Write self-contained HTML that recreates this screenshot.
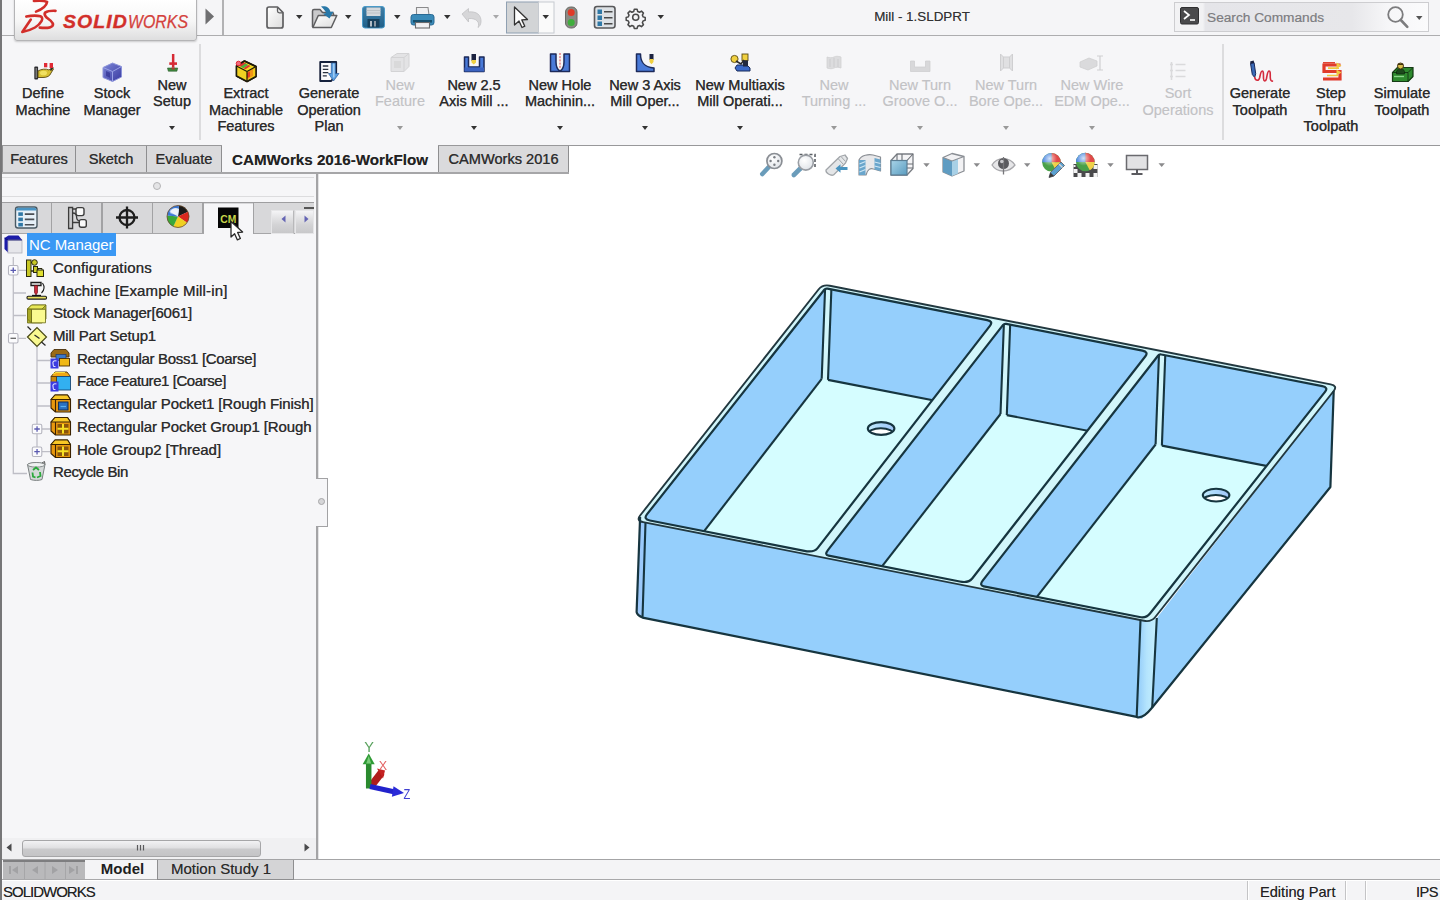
<!DOCTYPE html>
<html lang="en">
<head>
<meta charset="utf-8">
<title>Mill - 1.SLDPRT - SOLIDWORKS</title>
<style>
*{box-sizing:border-box;margin:0;padding:0}
html,body{width:1440px;height:900px;overflow:hidden;background:#fff}
body{font-family:"Liberation Sans",sans-serif;color:#222;position:relative;font-size:15px}
.abs{position:absolute}
#titlebar{position:absolute;left:0;top:0;width:1440px;height:36px;background:#f5f5f7}
#ribbon{position:absolute;left:0;top:36px;width:1440px;height:110px;background:#f6f6f8}
.rb{-webkit-text-stroke:.25px #2a2a2a;position:absolute;text-align:center;font-size:14.5px;line-height:16.5px;color:#2a2a2a;white-space:nowrap;transform:translateX(-50%);text-shadow:0 0 0.6px rgba(40,40,40,.55)}
.rb.dis{color:#c2c2c5;text-shadow:none;-webkit-text-stroke:.15px #c2c2c5}
.dd{position:absolute;width:0;height:0;border-left:3.5px solid transparent;border-right:3.5px solid transparent;border-top:4px solid #333;transform:translateX(-50%)}
.dd.dis{border-top-color:#999}
.tab{position:absolute;top:146px;height:28px;background:#dadadc;border:1px solid #8e8e90;border-bottom:1.5px solid #98989a;border-top:none;border-left:none;font-size:14.6px;line-height:27.5px;-webkit-text-stroke:.2px #333;text-align:center;color:#2c2c2c;white-space:nowrap;text-shadow:0 0 0.5px rgba(40,40,40,.5)}
.tab.act{background:#f6f6f8;border-bottom-color:#f6f6f8;border-top-color:#8e8e90;font-weight:bold;color:#222}
#panel{position:absolute;left:0;top:173px;width:319px;height:686px;background:#f6f6f8}
.tr{-webkit-text-stroke:.2px #2b2b2b;position:absolute;font-size:15px;line-height:22px;height:22px;white-space:nowrap;color:#2b2b2b;text-shadow:0 0 0.5px rgba(40,40,40,.5)}
svg{position:absolute;overflow:visible}
</style>
</head>
<body>
<div id="titlebar">
  <!-- window left edge -->
  <div class="abs" style="left:0;top:0;width:2px;height:900px;background:#767678;z-index:50"></div>
  <!-- bottom line of title bar -->
  <div class="abs" style="left:0;top:35px;width:1440px;height:2px;background:#adadaf"></div>
  <!-- logo box -->
  <div class="abs" style="left:14px;top:-2px;width:183px;height:43px;border:1px solid #b4b4b6;border-radius:0 0 3px 3px;background:linear-gradient(#ffffff 0%,#f6f6f6 55%,#dededf 100%);box-shadow:0 1px 2px rgba(0,0,0,.18);z-index:5"></div>
  <svg class="abs" style="left:0;top:0;z-index:6" width="200" height="40" viewBox="0 0 200 40">
    <g fill="none" stroke="#d22f2a" stroke-linecap="round" stroke-linejoin="round" filter="url(#lgsoft)">
      <path d="M33.800 1 C39 .6 44 .6 47.200 1.800 C46.500 6 41 9.800 36 11.600" stroke-width="2.500"/>
      <path d="M26.300 16.600 C31 15.600 37 15.400 40.500 16.300 C44.500 18 41 24 35 27.500 C31 29.800 26.500 31.300 22.300 32 L30.800 19.600" stroke-width="2.600"/>
      <path d="M55.500 10.800 C51 10.600 47.500 11 45.500 12.300 C43.500 14.200 45.500 16.800 48.500 19 C52 21.500 54 23.600 52.500 25.800 C50.500 28 45 28.200 39.800 27.600" stroke-width="2.700"/>
    </g>
    <defs><filter id="lgsoft" x="-5%" y="-5%" width="110%" height="110%"><feGaussianBlur stdDeviation=".35"/></filter></defs>
    <text x="63" y="28.200" font-family="Liberation Sans, sans-serif" font-size="18" font-style="italic" font-weight="bold" fill="#d22f2a" stroke="#d22f2a" stroke-width=".35" textLength="65" lengthAdjust="spacingAndGlyphs" letter-spacing="1">SOLID</text>
    <text x="128" y="28.200" font-family="Liberation Sans, sans-serif" font-size="18" font-style="italic" fill="#d4413c" stroke="#d4413c" stroke-width=".25" textLength="60" lengthAdjust="spacingAndGlyphs">WORKS</text>
  </svg>
  <!-- expand triangle -->
  <svg style="left:203px;top:7px" width="14" height="20" viewBox="0 0 14 20"><path d="M2.5 1.5 L11 9.5 L2.5 17.5 Z" fill="#6f6f71"/></svg>
  <div class="abs" style="left:222px;top:0;width:2px;height:35px;background:#b2b2b4"></div>

  <!-- quick access icons -->
  <svg style="left:260px;top:0" width="420" height="36" viewBox="260 0 420 36">
    <defs>
      <linearGradient id="gdoc" x1="0" y1="0" x2="1" y2="1"><stop offset="0" stop-color="#ffffff"/><stop offset="1" stop-color="#dcdcdc"/></linearGradient>
      <linearGradient id="gsave" x1="0" y1="0" x2="0" y2="1"><stop offset="0" stop-color="#3f7fa8"/><stop offset="1" stop-color="#1f5f88"/></linearGradient>
    </defs>
    <!-- new -->
    <path d="M269 7 h8.500 l5.500 5.500 v13.500 q0 2 -2 2 h-12 q-2 0 -2 -2 v-17 q0 -2 2 -2 z" fill="url(#gdoc)" stroke="#5e5e60" stroke-width="1.700" stroke-linejoin="round"/>
    <path d="M277.500 7.500 v3.500 q0 1.800 1.800 1.800 h3.400" fill="none" stroke="#5e5e60" stroke-width="1.300"/>
    <path d="M296 15 h6.500 l-3.250 4 z" fill="#333"/>
    <!-- open -->
    <path d="M312.500 27 v-16 q0 -1.500 1.500 -1.500 h6 l2.500 3 h9.500 q1.500 0 1.500 1.500 v4" fill="#c9c9cb" stroke="#5e5e60" stroke-width="1.500" stroke-linejoin="round"/>
    <path d="M312.800 27.500 l5.500 -12 h18.500 l-5.500 12 z" fill="url(#gdoc)" stroke="#5e5e60" stroke-width="1.500" stroke-linejoin="round"/>
    <path d="M321 6.500 c5 -1 8.500 1 9.500 5.500 l3 -.6 l-4 7 l-6.500 -4.600 l3.200 -.7 c-.8 -2.500 -2.500 -3.800 -5.200 -6.600 z" fill="#2878a8"/>
    <path d="M345 15 h6.500 l-3.250 4 z" fill="#333"/>
    <!-- save -->
    <rect x="362.500" y="6.500" width="22" height="21.500" rx="2.500" fill="url(#gsave)" stroke="#4a9ac8" stroke-width="1"/>
    <rect x="366.500" y="7.500" width="14" height="8.500" fill="#d4d8dc"/>
    <path d="M366.500 10.500 h14 M366.500 13 h14" stroke="#b8bcc0" stroke-width=".8"/>
    <rect x="367.500" y="19" width="12" height="8.500" fill="#17405c"/>
    <rect x="370" y="21" width="2" height="5.500" fill="#b0bcc6"/><rect x="374" y="21" width="2" height="5.500" fill="#8a98a4"/>
    <path d="M394 15 h6.500 l-3.250 4 z" fill="#333"/>
    <!-- print -->
    <path d="M416.500 15 v-7.500 h11.500 l1 7.500 z" fill="#f0f0f2" stroke="#8a8a8c" stroke-width="1.100"/>
    <rect x="411" y="14.500" width="23" height="10.500" rx="2.500" fill="#3a8ab8" stroke="#2a6a94" stroke-width="1"/>
    <rect x="413" y="20" width="19" height="2.600" fill="#16506e"/>
    <rect x="415.500" y="22.500" width="14" height="5.500" fill="#f0f0f2" stroke="#6a6a6c" stroke-width="1.100"/>
    <path d="M444 15 h6.500 l-3.250 4 z" fill="#333"/>
    <!-- undo (disabled) -->
    <path d="M462 14 l6.500 -5.500 v3.500 c8 -1 13 3 12.500 10 c-.2 2.500 -1.500 4.500 -3 5.500 c2 -5 -1 -9.500 -9.500 -9 v3.500 z" fill="#d6d6d8" stroke="#c2c2c4" stroke-width=".8"/>
    <path d="M493 15 h6 l-3 3.800 z" fill="#a8a8aa"/>
    <!-- select (active) -->
    <rect x="506.500" y="2" width="32" height="31" fill="#d2d4d6" stroke="#8fa0b2" stroke-width="1"/>
    <rect x="538.500" y="2" width="15.500" height="31" fill="#fafafa" stroke="#c6cad0" stroke-width="1"/>
    <path d="M514.500 7 v18 l4.500 -4 l3 6.500 l2.800 -1.300 l-3 -6.300 l5.700 -.4 z" fill="#fdfdfd" stroke="#333" stroke-width="1.300" stroke-linejoin="round"/>
    <path d="M542.500 15 h6.500 l-3.250 4 z" fill="#333"/>
    <!-- traffic light -->
    <rect x="565.500" y="7" width="11.500" height="21" rx="5" fill="#8a8a84" stroke="#6a6a66" stroke-width="1"/>
    <circle cx="571.200" cy="12.500" r="3.500" fill="#e03a28"/>
    <circle cx="571.200" cy="22.500" r="3.500" fill="#3fae3c"/>
    <!-- options list -->
    <rect x="594.500" y="6.500" width="20.500" height="21.500" rx="2.500" fill="#dde1e5" stroke="#58585a" stroke-width="1.600"/>
    <g fill="#2f78a6"><rect x="597.500" y="9.500" width="4.500" height="4.500"/><rect x="597.500" y="15.500" width="4.500" height="4.500"/><rect x="597.500" y="21.500" width="4.500" height="4.500"/></g>
    <g stroke="#4a4a4a" stroke-width="1.400"><path d="M604 11.700 h8.500 M604 17.700 h8.500 M604 23.700 h8.500"/></g>
    <!-- gear -->
    <g transform="translate(635.700 17.200) scale(.8)" fill="none" stroke="#4a4a4a">
      <circle r="3.800" stroke-width="1.900"/>
      <path stroke-width="1.900" stroke-linejoin="round" d="M-1.800 -9.800 h3.600 l.7 2.600 l2.300 1 l2.400 -1.400 l2.500 2.500 l-1.400 2.400 l1 2.300 l2.600 .7 v3.600 l-2.600 .7 l-1 2.300 l1.400 2.400 l-2.500 2.500 l-2.400 -1.400 l-2.300 1 l-.7 2.600 h-3.600 l-.7 -2.600 l-2.300 -1 l-2.400 1.400 l-2.500 -2.500 l1.400 -2.400 l-1 -2.300 l-2.600 -.7 v-3.600 l2.600 -.7 l1 -2.300 l-1.400 -2.400 l2.500 -2.500 l2.400 1.400 l2.300 -1 z"/>
    </g>
    <path d="M657.500 15 h6.500 l-3.250 4 z" fill="#333"/>
  </svg>

  <!-- document title -->
  <div class="abs" style="left:822px;top:8px;width:200px;text-align:center;font-size:13.4px;line-height:18px;color:#333;text-shadow:0 0 .5px rgba(40,40,40,.5)">Mill - 1.SLDPRT</div>

  <!-- search box -->
  <div class="abs" style="left:1173.500px;top:2px;width:255px;height:29.500px;background:linear-gradient(90deg,#f2f2f4 0%,#f2f2f4 11%,#e5e5e9 12%,#e7e7ea 70%,#f6f6f8 84%,#fbfbfc 100%);border:1px solid #cdcdd0"></div>
  <svg style="left:1180px;top:7px" width="20" height="18" viewBox="0 0 20 18"><rect x=".5" y=".5" width="18" height="16.500" rx="1.500" fill="#4a4a4c" stroke="#2e2e30"/><path d="M4 4 l5 4 l-5 4" fill="none" stroke="#fff" stroke-width="1.700"/><path d="M10 13 h5" stroke="#fff" stroke-width="1.600"/></svg>
  <div class="abs" style="left:1207px;top:9px;font-size:13.700px;line-height:18px;color:#7c7c80;-webkit-text-stroke:.2px #7c7c80;white-space:nowrap">Search Commands</div>
  <svg style="left:1384px;top:4px" width="44" height="26" viewBox="0 0 44 26"><circle cx="11.500" cy="10.500" r="7.300" fill="none" stroke="#7c7c7e" stroke-width="1.800"/><path d="M16.800 16 l6.500 6.800" stroke="#7c7c7e" stroke-width="2.600" stroke-linecap="round"/><path d="M32 12 h6.500 l-3.250 4 z" fill="#555"/></svg>
</div>
<div id="ribbon"></div>
<div class="abs" style="left:0;top:144.500px;width:1440px;height:1.500px;background:#98989a"></div>
<div class="abs" style="left:199px;top:44px;width:2px;height:96px;background:#dcdcde"></div>
<div class="abs" style="left:1222px;top:44px;width:2px;height:96px;background:#dcdcde"></div>
<div class="rb" style="left:43px;top:85px">Define<br>Machine</div>
<div class="rb" style="left:112px;top:85px">Stock<br>Manager</div>
<div class="rb" style="left:172px;top:76.5px">New<br>Setup</div>
<div class="dd" style="left:172px;top:126px"></div>
<div class="rb" style="left:246px;top:85px">Extract<br>Machinable<br>Features</div>
<div class="rb" style="left:329px;top:85px">Generate<br>Operation<br>Plan</div>
<div class="rb dis" style="left:400px;top:76.5px">New<br>Feature</div>
<div class="dd dis" style="left:400px;top:126px"></div>
<div class="rb" style="left:474px;top:76.5px">New 2.5<br>Axis Mill ...</div>
<div class="dd" style="left:474px;top:126px"></div>
<div class="rb" style="left:560px;top:76.5px">New Hole<br>Machinin...</div>
<div class="dd" style="left:560px;top:126px"></div>
<div class="rb" style="left:645px;top:76.5px">New 3 Axis<br>Mill Oper...</div>
<div class="dd" style="left:645px;top:126px"></div>
<div class="rb" style="left:740px;top:76.5px">New Multiaxis<br>Mill Operati...</div>
<div class="dd" style="left:740px;top:126px"></div>
<div class="rb dis" style="left:834px;top:76.5px">New<br>Turning ...</div>
<div class="dd dis" style="left:834px;top:126px"></div>
<div class="rb dis" style="left:920px;top:76.5px">New Turn<br>Groove O...</div>
<div class="dd dis" style="left:920px;top:126px"></div>
<div class="rb dis" style="left:1006px;top:76.5px">New Turn<br>Bore Ope...</div>
<div class="dd dis" style="left:1006px;top:126px"></div>
<div class="rb dis" style="left:1092px;top:76.5px">New Wire<br>EDM Ope...</div>
<div class="dd dis" style="left:1092px;top:126px"></div>
<div class="rb dis" style="left:1178px;top:85px">Sort<br>Operations</div>
<div class="rb" style="left:1260px;top:85px">Generate<br>Toolpath</div>
<div class="rb" style="left:1331px;top:85px">Step<br>Thru<br>Toolpath</div>
<div class="rb" style="left:1402px;top:85px">Simulate<br>Toolpath</div>
<svg style="left:0;top:0" width="1440" height="146" viewBox="0 0 1440 146">
  <defs>
    <linearGradient id="gcube" x1="0" y1="0" x2="1" y2="1"><stop offset="0" stop-color="#7c86d8"/><stop offset="1" stop-color="#3a3aa0"/></linearGradient>
    <filter id="soft" x="-10%" y="-10%" width="120%" height="120%"><feGaussianBlur stdDeviation=".45"/></filter>
  </defs>
  <g filter="url(#soft)">
  <!-- Define Machine (cx 43, cy 72) -->
  <g>
    <rect x="34.300" y="66.500" width="3.800" height="13" rx="1" fill="#2e2e30"/>
    <rect x="35.600" y="68" width="1.200" height="10" fill="#8a8a8c"/>
    <path d="M38 71 c3 -2 8 -2.500 11 -1 l3 -2.500 l1.500 1.500 l-2.500 4 c-1 3 -4 4.500 -8 4.500 h-5 z" fill="#d8c030" stroke="#5a4a14" stroke-width=".9"/>
    <ellipse cx="43.500" cy="73" rx="3.500" ry="2.300" fill="#f0e060"/>
    <path d="M50.500 70.500 l2.500 -3.500" stroke="#2a2a2a" stroke-width="1.600"/>
    <rect x="44" y="63" width="3.300" height="4.300" fill="#e02a36"/>
    <rect x="49.600" y="63" width="3.400" height="5" fill="#e02a36"/>
  </g>
  <!-- Stock Manager (cx 112, cy 72) -->
  <g>
    <path d="M103 67.500 l9.500 -4.500 l9 3.500 v10.500 l-9 4.500 l-9.500 -4 z" fill="url(#gcube)" stroke="#8a92d8" stroke-width="1"/>
    <path d="M103 67.500 l9.500 4 l9 -5 M112.500 71.500 v10" fill="none" stroke="#9aa2e6" stroke-width="1"/>
    <path d="M106 71 l4 1.800 v5 l-4 -1.800 z" fill="#2a2a88" opacity=".6"/>
  </g>
  <!-- New Setup (cx 172) -->
  <g>
    <rect x="171.900" y="54" width="2.500" height="13.500" fill="#d62a36"/>
    <rect x="169.300" y="62.300" width="7.700" height="2.600" fill="#d62a36"/>
    <path d="M167.500 68 h10.200 l-.8 3.200 h-8.600 z" fill="#3f8a3f" stroke="#2a5a2a" stroke-width=".6"/>
    <rect x="171.700" y="67.500" width="3" height="2" fill="#b03a30"/>
  </g>
  <!-- Extract Machinable Features (cx 246, cy 72) -->
  <g stroke-linejoin="round">
    <path d="M236.500 66 l8 -5 l11.500 5.500 v10 l-9 5 l-10.500 -5.500 z" fill="#f4d820" stroke="#1e1a08" stroke-width="1.500"/>
    <path d="M247 81.500 v-10 l9 -5 v10 z" fill="#f0c818"/>
    <path d="M236.500 66 l10.500 5.500 v10 l-10.500 -5.500 z" fill="#f0d020"/>
    <path d="M247 72 l6 -3.300 v7 l-6 3.500 z" fill="#f08a18" opacity=".85"/>
    <path d="M247 73 l3 -1.500 v5 l-3 1.800 z" fill="#e83a20"/>
    <path d="M237 64.500 l5 -3 l4.500 2.200 l-5 3.200 z" fill="#e03030"/>
    <path d="M240.500 66.800 l5 -3.200 l3 1.500 l-5 3.200 z" fill="#50b040"/>
    <path d="M243.500 68.300 l5 -3.200 l2 1 l-5 3.200 z" fill="#e03030"/>
    <path d="M236.500 66 l10.500 5.500 l9 -5 M247 71.500 v10" fill="none" stroke="#1e1a08" stroke-width="1.200"/>
    <path d="M236.500 66 l8 -5 l11.500 5.500 v10 l-9 5 l-10.500 -5.500 z" fill="none" stroke="#1e1a08" stroke-width="1.500"/>
    <circle cx="238.500" cy="63.500" r="2.300" fill="#f06a7a" stroke="#e02a36" stroke-width="1"/>
  </g>
  <!-- Generate Operation Plan (cx 329) -->
  <g>
    <path d="M320.200 62 h16 v12 l-5 7 h-11 z" fill="#fbfbfd" stroke="#18243e" stroke-width="1.800" stroke-linejoin="round"/>
    <path d="M322.800 66 h5.500 M322.800 69.300 h5.500 M322.800 72.600 h5.500 M322.800 75.900 h4" stroke="#2a3040" stroke-width="1.300"/>
    <path d="M331.300 63 h4.200 v10.500 h3.500 l-5.500 7.500 l-5 -7.500 h2.800 z" fill="#5a9ee0" stroke="#2a5a9a" stroke-width=".7"/>
    <path d="M333.800 63.500 v14" stroke="#a8d0f4" stroke-width="1.400"/>
  </g>
  <!-- New Feature disabled (cx 400) -->
  <g opacity=".9">
    <path d="M391 57.500 l6 -4 h12 v13 l-5 5 h-13 z" fill="#e2e2e4" stroke="#d0d0d2" stroke-width="1"/>
    <path d="M391 57.500 h13 l5 -4 M404 57.500 v14" fill="none" stroke="#d0d0d2" stroke-width="1"/>
    <rect x="394" y="61" width="7" height="7" fill="#d6d6d8"/>
  </g>
  <!-- New 2.5 Axis Mill (cx 474) -->
  <g>
    <path d="M464.500 57 h4 v10 h11 v-10 h4.500 v14.500 h-19.500 z" fill="#4a7ad8" stroke="#1a2a5a" stroke-width="1.500" stroke-linejoin="round"/>
    <path d="M464.500 67.500 h19.500 v4 h-19.500 z" fill="#3a62c0"/>
    <rect x="471.500" y="54" width="4.500" height="7" fill="#1a2240"/>
    <path d="M471.500 60 h4.500 v2.500 l-2.250 2 l-2.250 -2 z" fill="#f0d040"/>
  </g>
  <!-- New Hole Machining (cx 560) -->
  <g>
    <path d="M550.500 54 h5.500 v8 c0 5 2 8 4 9 c2 -1 4 -4 4 -9 v-8 h5.500 v17.500 h-19 z" fill="#4a7ad8" stroke="#1a2a5a" stroke-width="1.500" stroke-linejoin="round"/>
    <path d="M560 53 v16" stroke="#e04040" stroke-width="1" stroke-dasharray="2 1.200"/>
  </g>
  <!-- New 3 Axis (cx 645) -->
  <g>
    <path d="M636.500 54 h4 c0 8 3 13 13.500 14 v3.500 h-17.500 z" fill="#4a7ad8" stroke="#1a2a5a" stroke-width="1.500" stroke-linejoin="round"/>
    <rect x="649.500" y="54" width="4" height="6" fill="#1a2240"/>
    <path d="M649.500 59 h4 v3 l-2 2.200 l-2 -2.200 z" fill="#f0d040"/>
  </g>
  <!-- New Multiaxis (cx 740) -->
  <g>
    <circle cx="734.500" cy="59" r="3.600" fill="#f0d040" stroke="#5a4a10" stroke-width=".9"/>
    <rect x="742" y="54" width="6" height="6.500" fill="#f0d040" stroke="#5a4a10" stroke-width=".9"/>
    <path d="M736 61 l5 3 l3 -4" fill="none" stroke="#2a2a2a" stroke-width="1.600"/>
    <path d="M737 65 h10 l3 3 v3 h-13 l-2 -3 z" fill="#3a6ac8" stroke="#1a2a5a" stroke-width="1"/>
    <path d="M743 60.500 h5 v6 h-5 z" fill="#222a40"/>
  </g>
  <!-- New Turning disabled (cx 834) -->
  <g fill="#dcdcde" stroke="#d0d0d2" stroke-width=".8">
    <path d="M827 57 c3 1 5 1 7 0 c2 -1 4 -1 7 0 v11 c-3 -1 -5 -1 -7 0 c-2 1 -4 1 -7 0 z"/>
    <path d="M830 59 v8 M834 58 v9 M838 59 v8" fill="none" stroke="#c8c8ca"/>
  </g>
  <!-- New Turn Groove disabled (cx 920) -->
  <g fill="#d8d8da" stroke="#cfcfd1" stroke-width=".8">
    <path d="M910.500 61 h4 v6 h11 v-6 h4.500 v10.500 h-19.500 z"/>
  </g>
  <!-- New Turn Bore disabled (cx 1006) -->
  <g fill="#e0e0e2" stroke="#cfcfd1" stroke-width="1">
    <path d="M1000.500 54 l3 3 h6 l3 -3 v17 l-3 -3 h-6 l-3 3 z"/>
    <path d="M1003.500 57 v11 M1009.500 57 v11" fill="none"/>
  </g>
  <!-- New Wire EDM disabled (cx 1092) -->
  <g fill="#dadadc" stroke="#cfcfd1" stroke-width=".8">
    <path d="M1080 62 l9 -4 l8 3 v5 l-9 4 l-8 -3 z"/>
    <path d="M1097 56 h6 M1100 56 v14 M1097 70 h6" fill="none" stroke="#d0d0d2" stroke-width="1.200"/>
  </g>
  <!-- Sort Operations disabled (cx 1178) -->
  <g stroke="#dadadc" stroke-width="1.600" fill="none">
    <path d="M1171.500 62 v18 M1170 64.500 h3 M1170 70.500 h3 M1170 76.500 h3 M1175.500 64.500 h10 M1175.500 70.500 h10 M1175.500 76.500 h10"/>
  </g>
  <!-- Generate Toolpath (cx 1260) -->
  <g>
    <path d="M1250.500 63.500 l3.600 -.8 l1.600 11 l-1 3.800 l-2.400 -3 z" fill="#3a6ab8" stroke="#1a2a5a" stroke-width="1"/>
    <path d="M1250.400 63.800 l-.3 -2.400 l3.600 -.8 l.4 2.400 z" fill="#1a2040"/>
    <path d="M1254.700 77.500 c1 3.500 4 4 5 0 c.8 -4 1.200 -6.500 2.600 -6.500 c1.600 0 1 4.500 1.200 7.500 c.2 3 2.200 3.500 3 0 c.8 -4 1 -7.500 2.600 -7.500 c1.600 0 1 4 1.200 7 c.2 2.500 1.200 3.500 2.200 3" fill="none" stroke="#d42a3c" stroke-width="1.600" stroke-linecap="round"/>
  </g>
  <!-- Step Thru Toolpath (cx 1331) -->
  <g transform="translate(0 2)">
    <path d="M1340.500 63 h-16.500 v6.500 h16 v7.500 h-17" fill="none" stroke="#e03a2a" stroke-width="3.200"/>
    <path d="M1339 66.200 h-11 M1327 73.500 h11" fill="none" stroke="#f0c840" stroke-width="1.700"/>
    <path d="M1336.500 60.500 l5 3 l-5 3 z M1336.500 67.500 l5 3 l-5 3 z" fill="#f0c840"/>
    <path d="M1323 60.800 h12" stroke="#e03a2a" stroke-width="1.500"/>
  </g>
  <!-- Simulate Toolpath (cx 1402) -->
  <g>
    <path d="M1392.500 72.500 l5 -5 h15.500 v9 l-5 5 h-15.500 z" fill="#2f8a2f" stroke="#123a12" stroke-width="1.200" stroke-linejoin="round"/>
    <path d="M1392.500 72.500 h15.500 l5 -5 M1408 72.500 v9" fill="none" stroke="#123a12" stroke-width="1"/>
    <path d="M1394 76.500 h10" stroke="#8ad88a" stroke-width="1.300"/>
    <path d="M1396.500 71.500 c.5 -3.500 7.500 -3.500 8 0 v2.500 h-8 z" fill="#1e4a1e" stroke="#0e2a0e" stroke-width=".7"/>
    <circle cx="1400.500" cy="66" r="3" fill="#d8c050" stroke="#3a2a08" stroke-width=".9"/>
    <path d="M1397.800 64.300 h5.400" stroke="#3a2a08" stroke-width="1.300"/>
  </g>
  </g>
</svg>
<!-- command manager tabs -->
<div class="abs" style="left:0;top:146px;width:1440px;height:28px;background:#fff"></div>
<div class="tab" style="left:2px;width:74px;border-left:1px solid #8e8e90">Features</div>
<div class="tab" style="left:76px;width:71px">Sketch</div>
<div class="tab" style="left:147px;width:75px">Evaluate</div>
<div class="tab act" style="left:222px;width:216px;top:143px;height:31px;line-height:33.5px;font-size:15.200px;border-top:none;border-right:none;border-bottom:1.5px solid #98989a;-webkit-text-stroke:0">CAMWorks 2016-WorkFlow</div>
<div class="tab" style="left:438px;width:131px;border-left:1px solid #8e8e90">CAMWorks 2016</div>
<div id="panel">
  <!-- top border line -->
  
  <!-- right border -->
  <div class="abs" style="left:316px;top:0;width:2px;height:686px;background:#a4a4a6"></div>
  <div class="abs" style="left:318px;top:0;width:1px;height:686px;background:#e4e4e6"></div>
  <!-- header strip -->
  <div class="abs" style="left:2px;top:3.500px;width:312px;height:1.500px;background:#dcdcde"></div>
  <div class="abs" style="left:2px;top:22.500px;width:312px;height:1.500px;background:#dcdcde"></div>
  <div class="abs" style="left:153px;top:9px;width:8px;height:8px;border-radius:50%;border:1.500px solid #b4b4b6;background:#e4e4e6"></div>
  <!-- panel tab strip -->
  <div class="abs" style="left:2px;top:29px;width:312px;height:32px;background:#d8d8da;border-top:1.500px solid #9e9ea0;border-bottom:1.500px solid #a6a6a8"></div>
  <div class="abs" style="left:50.500px;top:30px;width:1.500px;height:30px;background:#a2a2a4"></div>
  <div class="abs" style="left:101px;top:30px;width:1.500px;height:30px;background:#a2a2a4"></div>
  <div class="abs" style="left:151.500px;top:30px;width:1.500px;height:30px;background:#a2a2a4"></div>
  <div class="abs" style="left:202px;top:30px;width:1.500px;height:30px;background:#a2a2a4"></div>
  <div class="abs" style="left:203.500px;top:30.500px;width:49px;height:32px;background:#f6f6f8"></div>
  <div class="abs" style="left:252.500px;top:30px;width:1.500px;height:31px;background:#a2a2a4"></div>
  <!-- scroll buttons -->
  <div class="abs" style="left:271px;top:37px;width:23px;height:24px;background:linear-gradient(#f4f4f6,#d4d4d6 60%,#c8c8ca);border:1px solid #e6e6e8;border-right-color:#b8b8ba"></div>
  <div class="abs" style="left:295px;top:37px;width:19px;height:24px;background:linear-gradient(#f4f4f6,#d4d4d6 60%,#c8c8ca);border:1px solid #e6e6e8"></div>
  <div class="abs" style="left:304px;top:33.500px;width:10px;height:2px;background:#555"></div>
  <svg style="left:0;top:27px" width="319" height="44" viewBox="0 200 319 44">
    <path d="M285.500 215.500 v7 l-4 -3.500 z" fill="#6464b4"/>
    <path d="M304.500 215.500 v7 l4 -3.500 z" fill="#6464b4"/>
    <!-- tab1: feature manager list -->
    <g>
      <rect x="15.500" y="207" width="21.500" height="21" rx="2.500" fill="#e6f0f8" stroke="#4a5a64" stroke-width="1.400"/>
      <path d="M16.200 210.500 v-1 q0 -1.800 1.800 -1.800 h16.500 q1.800 0 1.800 1.800 v1 z" fill="#4a94c4"/>
      <g fill="#2f78a6"><rect x="18.300" y="212.300" width="4.600" height="3.600"/><rect x="18.300" y="217.600" width="4.600" height="3.600"/><rect x="18.300" y="222.900" width="4.600" height="3.600"/></g>
      <path d="M24.800 214.100 h9.500 M24.800 219.400 h9.500 M24.800 224.700 h9.500" stroke="#4a4e54" stroke-width="1.600"/>
    </g>
    <!-- tab2: property manager -->
    <g>
      <path d="M68.600 207.500 h4 v21 h-4 z" fill="#c8c8ca" stroke="#3c3c3c" stroke-width="1.300"/>
      <path d="M72.600 209 h4 M72.600 222.500 h7" stroke="#3c3c3c" stroke-width="1.400" fill="none"/>
      <path d="M72.600 213 q4 0 4 4 t4 4" stroke="#3c3c3c" stroke-width="1.300" fill="none"/>
      <rect x="76" y="207.600" width="8" height="8" rx="2" fill="#fafafa" stroke="#3c3c3c" stroke-width="1.400"/>
      <rect x="79.300" y="219.600" width="7" height="7.600" rx="2" fill="#fafafa" stroke="#3c3c3c" stroke-width="1.400"/>
    </g>
    <!-- tab3: crosshair -->
    <g fill="none" stroke="#1e1e1e" stroke-width="2.300">
      <circle cx="127" cy="217.500" r="7.500"/>
      <path d="M127 206.500 v22 M116 217.500 h22"/>
    </g>
    <!-- tab4: colour ball -->
    <g>
      <path d="M178 216.5 L178.96 205.54 A11 11 0 0 1 187.97 211.85 Z" fill="#1a1a1a"/>
      <path d="M178 216.5 L187.97 211.85 A11 11 0 0 1 187.01 222.81 Z" fill="#d8281e"/>
      <path d="M178 216.5 L187.01 222.81 A11 11 0 0 1 173.35 226.47 Z" fill="#f0d020"/>
      <path d="M178 216.5 L173.35 226.47 A11 11 0 0 1 167.04 215.54 Z" fill="#3aa83a"/>
      <path d="M178 216.5 L167.04 215.54 A11 11 0 0 1 178.96 205.54 Z" fill="#3a78d8"/>
      <path d="M178 216.500 L170 212 C172 208 176 207 179 209 Z" fill="#ffffff" opacity=".85"/>
      <circle cx="178" cy="216.500" r="11" fill="none" stroke="#6a4a2a" stroke-width=".8"/>
      <ellipse cx="174" cy="211.500" rx="4.500" ry="3" fill="#fff" opacity=".4"/>
    </g>
    <!-- tab5: CAM -->
    <g>
      <rect x="218" y="207.500" width="20.500" height="20.500" fill="#060606"/>
      <text x="228.300" y="223" text-anchor="middle" font-family="Liberation Sans, sans-serif" font-size="11.500" font-weight="bold" fill="#c8d64a" textLength="16" lengthAdjust="spacingAndGlyphs">CM</text>
      <path d="M231 221.500 v15.500 l3.600 -3.300 l2.800 6.200 l3 -1.400 l-2.800 -6 l5 -.4 z" fill="#fff" stroke="#2a2a2a" stroke-width="1.300" stroke-linejoin="round"/>
    </g>
  </svg>
</div>
<!-- tree -->
<div class="abs" style="left:0;top:0;width:316px;height:860px;overflow:hidden">
<div class="tr" style="left:27px;top:233px;height:23px;line-height:23px;padding:0 3px 0 2px;background:#3a98f4;color:#fff;text-shadow:none;-webkit-text-stroke:0;letter-spacing:-0.055px">NC Manager</div>
<div class="tr" style="left:53px;top:257px;letter-spacing:0.148px">Configurations</div>
<div class="tr" style="left:53px;top:279.5px;letter-spacing:0.144px">Machine [Example Mill-in]</div>
<div class="tr" style="left:53px;top:302px;letter-spacing:-0.189px">Stock Manager[6061]</div>
<div class="tr" style="left:53px;top:325px;letter-spacing:-0.181px">Mill Part Setup1</div>
<div class="tr" style="left:77px;top:347.5px;letter-spacing:-0.331px">Rectangular Boss1 [Coarse]</div>
<div class="tr" style="left:77px;top:370px;letter-spacing:-0.428px">Face Feature1 [Coarse]</div>
<div class="tr" style="left:77px;top:393px;letter-spacing:-0.107px">Rectangular Pocket1 [Rough Finish]</div>
<div class="tr" style="left:77px;top:416px;letter-spacing:-0.099px">Rectangular Pocket Group1 [Rough</div>
<div class="tr" style="left:77px;top:438.5px;letter-spacing:-0.054px">Hole Group2 [Thread]</div>
<div class="tr" style="left:53px;top:461px;letter-spacing:-0.382px">Recycle Bin</div>
</div>
<svg style="left:0;top:230px" width="100" height="260" viewBox="0 230 100 260">
  <defs>
    <filter id="soft2" x="-10%" y="-10%" width="120%" height="120%"><feGaussianBlur stdDeviation=".4"/></filter>
  </defs>
  <!-- connector lines -->
  <g stroke="#bebec6" stroke-width="1.300" fill="none">
    <path d="M13.300 257 V473.500 H27"/>
    <path d="M18.500 270.300 H26 M13.300 293 H26 M13.300 315.500 H26 M18.500 338.300 H26"/>
    <path d="M37 347 V447"/>
    <path d="M37 360.500 H50 M37 383 H50 M37 406 H50 M42 429 H50 M42 451.700 H50"/>
  </g>
  <!-- expand boxes -->
  <g fill="#fbfbfd" stroke="#b4b4be" stroke-width="1.100">
    <rect x="8.500" y="265.500" width="9.500" height="9.500" rx="1.500"/>
    <rect x="8.500" y="333.500" width="9.500" height="9.500" rx="1.500"/>
    <rect x="32.300" y="424.300" width="9.500" height="9.500" rx="1.500"/>
    <rect x="32.300" y="447" width="9.500" height="9.500" rx="1.500"/>
  </g>
  <g stroke="#5a5ab0" stroke-width="1.300">
    <path d="M10.500 270.300 h5.500 M13.250 267.500 v5.500"/>
    <path d="M10.500 338.300 h5.500" stroke="#666"/>
    <path d="M34.300 429 h5.500 M37.050 426.300 v5.500"/>
    <path d="M34.300 451.700 h5.500 M37.050 449 v5.500"/>
  </g>
  <g filter="url(#soft2)">
  <!-- NC Manager cube -->
  <g>
    <path d="M4.500 238 l4 -2.500 h10 l3.500 4.500 v12.500 h-14 l-3.500 -3.500 z" fill="#1a1aa8"/>
    <rect x="8" y="240" width="14" height="13" fill="#e6e6ea" stroke="#b0b0b8" stroke-width=".8"/>
    <path d="M4.500 238 l3.500 2 h14" fill="none" stroke="#0a0a70" stroke-width=".8"/>
  </g>
  <!-- Configurations -->
  <g fill="#c8c828" stroke="#2a2a10" stroke-width="1">
    <rect x="26.500" y="260" width="4.500" height="16.500"/>
    <circle cx="34.500" cy="262.500" r="2.800"/>
    <path d="M31 262.500 h1 M31 271 h2.500" fill="none" stroke-width="1.300"/>
    <rect x="33.500" y="266.500" width="4" height="6"/>
    <rect x="37" y="270" width="6.500" height="6.500" fill="#e0e030"/>
    <path d="M38 270 v-1.500 h4 v1.500" fill="none"/>
  </g>
  <!-- Machine -->
  <g>
    <path d="M31 282.500 h10 v3 h-10 z" fill="#f4f4f4" stroke="#1a1a1a" stroke-width="1.300"/>
    <path d="M34.500 285.500 h3 v7 l-1.500 2.500 l-1.500 -2.500 z" fill="#c82a3a" stroke="#701018" stroke-width=".7"/>
    <path d="M42.500 283 c2 3 2 7 -1 10" fill="none" stroke="#1a1a1a" stroke-width="1.100"/>
    <path d="M32 295.500 h9" stroke="#1a1a1a" stroke-width="1.300"/>
    <rect x="27" y="296.300" width="19.500" height="2.800" rx="1.200" fill="#e8e060" stroke="#1a1a1a" stroke-width="1.100"/>
  </g>
  <!-- Stock Manager cube -->
  <g stroke="#6a6a18" stroke-width=".8">
    <path d="M27.500 309 l4 -4 h14.500 v14 l-4 4 h-14.500 z" fill="#b4b430"/>
    <path d="M27.500 309 l4 -4 h14.500 l-4 4 z" fill="#e8e858"/>
    <rect x="31.500" y="309" width="14.500" height="14" fill="#f8f888" transform="translate(-4 0)" opacity="0"/>
    <path d="M31.800 309.300 h14 v0 l0 0 v13.500 h-14 z" fill="#fafa90" transform="translate(-.3 0)"/>
    <path d="M27.500 309 l4 .3 v13.700 l-4 -4 z" fill="#a8a828"/>
  </g>
  <!-- Mill Part Setup -->
  <g>
    <path d="M27.500 337 l9.500 -9.500 l9.500 9.500 l-9.500 9.500 z" fill="#f8f890" stroke="#4a4a18" stroke-width="1.200"/>
    <path d="M27.500 326.500 l3.500 3.500 M34.500 335 l5 3.500 M41.500 342 l4 3.500" stroke="#2a2a2a" stroke-width="1.300" fill="none"/>
  </g>
  <!-- Rectangular Boss1 -->
  <g>
    <path d="M51 353 l3 -3.500 h12 l3 3.500 v4 h-18 z" fill="#9a6a18" stroke="#4a3008" stroke-width=".9"/>
    <rect x="56" y="354.500" width="10" height="6" fill="#3a78c8" stroke="#1a3a70" stroke-width=".7"/>
    <rect x="59.500" y="358.500" width="10" height="7.500" fill="#f0b818" stroke="#4a3008" stroke-width=".9"/>
    <rect x="50.500" y="358.500" width="8" height="10" fill="#3a3ae0"/>
    <path d="M56.500 361 c-3 -1 -4 1 -3.500 2.500 c.5 1.500 -.5 3.500 2.500 3" fill="none" stroke="#e0e0ff" stroke-width="1.100"/>
  </g>
  <!-- Face Feature1 -->
  <g>
    <path d="M51 376.500 l4 -4.500 h12 l3.500 4.500 z" fill="#f0a818" stroke="#4a3008" stroke-width=".9"/>
    <path d="M53 374 l3 -1.500 h9" stroke="#f8e040" stroke-width="1.200" fill="none"/>
    <rect x="56.500" y="376.500" width="14" height="13.500" fill="#30b0f0" stroke="#1a4a78" stroke-width=".9"/>
    <path d="M51 376.500 h5.500 v6 h-5.500 z" fill="#c88a10" stroke="#4a3008" stroke-width=".7"/>
    <rect x="50.500" y="381.500" width="8" height="10" fill="#3a3ae0"/>
    <path d="M56.500 384 c-3 -1 -4 1 -3.500 2.500 c.5 1.500 -.5 3.500 2.500 3" fill="none" stroke="#e0e0ff" stroke-width="1.100"/>
  </g>
  <!-- Rectangular Pocket1 -->
  <g stroke="#3a2406" stroke-width="1.100" stroke-linejoin="round">
    <path d="M51 399.500 l4 -4.500 h12.500 l3 4.500 v12.500 h-15 l-4.500 -4 z" fill="#e89810"/>
    <path d="M51 399.500 l4 -4.500 h12.500 l3 4.500 z" fill="#f8c828"/>
    <path d="M55.500 399.500 v12.500 M51 399.500 l4.500 0" fill="none"/>
    <rect x="58.500" y="402" width="9.500" height="8" fill="#2a70c0" stroke="#12305c"/>
    <path d="M60.500 406.500 h5.500" stroke="#58b0f0" stroke-width="1.200"/>
  </g>
  <!-- Rectangular Pocket Group1 -->
  <g stroke="#3a2406" stroke-width="1.100" stroke-linejoin="round">
    <path d="M51 422 l4 -4.500 h12.500 l3 4.500 v13 h-15 l-4.500 -4 z" fill="#e89810"/>
    <path d="M51 422 l4 -4.500 h12.500 l3 4.500 z" fill="#f8c828"/>
    <path d="M55.500 422 v13" fill="none"/>
    <rect x="57.500" y="424" width="11" height="9.500" fill="#8a5408" stroke="none"/>
    <path d="M63 424 v9.500 M57.500 428.700 h11" stroke="#f8e020" stroke-width="2" fill="none"/>
  </g>
  <!-- Hole Group2 -->
  <g stroke="#3a2406" stroke-width="1.100" stroke-linejoin="round">
    <path d="M51 444.500 l4 -4.500 h12.500 l3 4.500 v13 h-15 l-4.500 -4 z" fill="#e89810"/>
    <path d="M51 444.500 l4 -4.500 h12.500 l3 4.500 z" fill="#f8c828"/>
    <path d="M55.500 444.500 v13" fill="none"/>
    <rect x="57.500" y="446.500" width="11" height="9.500" fill="#8a5408" stroke="none"/>
    <path d="M63 446.500 v9.500 M57.500 451.200 h11" stroke="#f8e020" stroke-width="2" fill="none"/>
  </g>
  <!-- Recycle Bin -->
  <g>
    <path d="M27.500 464.500 c5 -2.500 12 -2.500 17.500 0 l-3 15 c-3 1.200 -8 1.200 -11.500 0 z" fill="#d4d8d8" stroke="#7a8080" stroke-width="1"/>
    <ellipse cx="36.200" cy="464.800" rx="8.700" ry="2.300" fill="#eef0f0" stroke="#7a8080" stroke-width=".9"/>
    <path d="M33 470 l3 -2.500 l3 2.500 M40 472 l.5 4 l-3.500 1.500 M32.500 472.500 l.5 4 l2.500 1" fill="none" stroke="#2aa83a" stroke-width="1.800"/>
    <path d="M42 463 l2.500 -1.500 l.5 3" fill="none" stroke="#555" stroke-width="1"/>
  </g>
  </g>
</svg>
<!-- line under command-manager tabs -->
<div class="abs" style="left:0;top:172px;width:569px;height:2px;background:#a6a6a8"></div>
<svg style="left:0;top:0" width="1440" height="900" viewBox="0 0 1440 900">
<defs>
<clipPath id="pk0"><path d="M824.3 289.7 Q825.4 288.3 827.5 288.7 L987.2 320.1 Q993.4 321.4 990.1 325.6 L817.6 548.1 Q813.9 552.8 804.4 550.9 L649.9 520.5 Q643.2 519.2 646.9 514.4 Z"/></clipPath>
<clipPath id="pk1"><path d="M1003.1 324.9 Q1004.2 323.5 1006.3 323.9 L1142.5 350.7 Q1148.7 352.0 1145.4 356.2 L972.2 578.5 Q968.5 583.3 959.8 581.5 L828.6 555.7 Q824.2 554.8 827.9 550.1 Z"/></clipPath>
<clipPath id="pk2"><path d="M1158.2 355.5 Q1159.3 354.0 1161.4 354.5 L1322.3 386.2 Q1328.5 387.4 1325.2 391.6 L1150.0 613.5 Q1146.3 618.3 1139.6 617.0 L983.7 586.3 Q979.1 585.3 982.7 580.6 Z"/></clipPath>
<linearGradient id="gfl" x1="0" y1="0" x2="1" y2="0"><stop offset="0" stop-color="#a0c6fa"/><stop offset="1" stop-color="#97cdfc"/></linearGradient>
<linearGradient id="gfr" x1="0" y1="0" x2="1" y2="0"><stop offset="0" stop-color="#8fc9f9"/><stop offset=".5" stop-color="#b4e4fd"/><stop offset="1" stop-color="#c6f0fe"/></linearGradient>
<filter id="mb" x="-2%" y="-2%" width="104%" height="104%"><feGaussianBlur stdDeviation=".4"/></filter>
</defs>
<g filter="url(#mb)">
<path d="M645.5 522.6 L1140.5 620.1 L1136.7 716.9 L642.5 617.6 Z" fill="#95cffc"/>
<path d="M640.1 517.0 L645.5 522.6 L642.5 617.6 L636.6 612.0 Z" fill="url(#gfl)"/>
<path d="M1140.5 620.1 L1156.8 618.0 L1152.2 707.5 L1141.7 719.1 L1136.7 716.9 Z" fill="url(#gfr)"/>
<path d="M1156.8 618.0 L1333.7 391.0 L1330.4 487.0 L1152.2 707.5 Z" fill="#95cffc"/>
<path d="M818.5 289.5 Q822.6 284.3 829.8 285.7 L1330.6 384.4 Q1337.8 385.8 1333.7 391.0 L1155.3 617.0 Q1151.2 622.2 1144.0 620.8 L643.2 522.1 Q636.0 520.7 640.1 515.5 Z" fill="#d2f6fb"/>
<g clip-path="url(#pk0)">
<path d="M822.2 378.3 L1015.9 416.4 L824.4 659.1 L630.6 621.0 Z" fill="#d5fdff"/>
<path d="M822.1 284.9 L1001.4 320.2 L996.4 412.6 L817.1 377.3 Z" fill="#95cffc"/>
<path d="M822.1 284.9 L634.3 522.9 L638.2 616.3 L821.5 378.3 Z" fill="#95cffc"/>
<path d="M825.1 287.3 L831.4 287.3 L828.0 379.9 L821.7 378.8 Z" fill="#d2f6fb"/>
<path d="M825.1 288.3 L821.7 378.8 M831.4 288.3 L828.0 379.9" stroke="#17353f" stroke-width="2.1" fill="none"/>
<path d="M828.0 379.9 L1000.5 413.4" stroke="#17353f" stroke-width="2.1" fill="none"/>
<path d="M821.7 378.8 L638.4 616.3" stroke="#17353f" stroke-width="2.1" fill="none"/>
</g>
<path d="M824.3 289.7 Q825.4 288.3 827.5 288.7 L987.2 320.1 Q993.4 321.4 990.1 325.6 L817.6 548.1 Q813.9 552.8 804.4 550.9 L649.9 520.5 Q643.2 519.2 646.9 514.4 Z" fill="none" stroke="#17353f" stroke-width="2.2"/>
<g clip-path="url(#pk1)">
<path d="M1001.0 413.5 L1171.3 447.0 L979.7 689.7 L811.8 656.7 Z" fill="#d5fdff"/>
<path d="M1000.9 320.1 L1156.8 350.8 L1151.7 443.2 L995.9 412.5 Z" fill="#95cffc"/>
<path d="M1000.9 320.1 L815.4 558.6 L815.3 651.9 L1000.3 413.5 Z" fill="#95cffc"/>
<path d="M1003.9 322.5 L1010.2 322.5 L1006.8 415.1 L1000.5 414.0 Z" fill="#d2f6fb"/>
<path d="M1003.9 323.5 L1000.5 414.0 M1010.2 323.5 L1006.8 415.1" stroke="#17353f" stroke-width="2.1" fill="none"/>
<path d="M1006.8 415.1 L1155.8 444.0" stroke="#17353f" stroke-width="2.1" fill="none"/>
<path d="M1000.5 414.0 L815.5 651.9" stroke="#17353f" stroke-width="2.1" fill="none"/>
</g>
<path d="M1003.1 324.9 Q1004.2 323.5 1006.3 323.9 L1142.5 350.7 Q1148.7 352.0 1145.4 356.2 L972.2 578.5 Q968.5 583.3 959.8 581.5 L828.6 555.7 Q824.2 554.8 827.9 550.1 Z" fill="none" stroke="#17353f" stroke-width="2.2"/>
<g clip-path="url(#pk2)">
<path d="M1156.1 444.0 L1351.1 482.5 L1159.5 725.2 L966.6 687.2 Z" fill="#d5fdff"/>
<path d="M1156.0 350.7 L1336.6 386.2 L1331.5 478.6 L1150.9 443.0 Z" fill="#95cffc"/>
<path d="M1156.0 350.7 L970.2 589.1 L970.1 682.4 L1155.4 444.0 Z" fill="#95cffc"/>
<path d="M1159.0 353.0 L1165.3 353.0 L1161.9 445.6 L1155.6 444.5 Z" fill="#d2f6fb"/>
<path d="M1159.0 354.0 L1155.6 444.5 M1165.3 354.0 L1161.9 445.6" stroke="#17353f" stroke-width="2.1" fill="none"/>
<path d="M1161.9 445.6 L1335.6 479.4" stroke="#17353f" stroke-width="2.1" fill="none"/>
<path d="M1155.6 444.5 L970.3 682.4" stroke="#17353f" stroke-width="2.1" fill="none"/>
</g>
<path d="M1158.2 355.5 Q1159.3 354.0 1161.4 354.5 L1322.3 386.2 Q1328.5 387.4 1325.2 391.6 L1150.0 613.5 Q1146.3 618.3 1139.6 617.0 L983.7 586.3 Q979.1 585.3 982.7 580.6 Z" fill="none" stroke="#17353f" stroke-width="2.2"/>
<clipPath id="h881"><ellipse cx="881.1" cy="428.5" rx="13.3" ry="6.4"/></clipPath>
<linearGradient id="hg881" x1="0" y1="0" x2="1" y2="0"><stop offset="0" stop-color="#c4ecfd"/><stop offset=".5" stop-color="#aad6fb"/><stop offset="1" stop-color="#a2c6f8"/></linearGradient>
<ellipse cx="881.1" cy="428.5" rx="13.3" ry="6.4" fill="url(#hg881)"/>
<g clip-path="url(#h881)"><ellipse cx="880.8000000000001" cy="434.7" rx="13.3" ry="6.4" fill="#ffffff" stroke="#17353f" stroke-width="2"/></g>
<ellipse cx="881.1" cy="428.5" rx="13.3" ry="6.4" fill="none" stroke="#17353f" stroke-width="2.1"/>
<clipPath id="h1216"><ellipse cx="1216.1" cy="495.1" rx="13.3" ry="6.4"/></clipPath>
<linearGradient id="hg1216" x1="0" y1="0" x2="1" y2="0"><stop offset="0" stop-color="#c4ecfd"/><stop offset=".5" stop-color="#aad6fb"/><stop offset="1" stop-color="#a2c6f8"/></linearGradient>
<ellipse cx="1216.1" cy="495.1" rx="13.3" ry="6.4" fill="url(#hg1216)"/>
<g clip-path="url(#h1216)"><ellipse cx="1215.8" cy="501.3" rx="13.3" ry="6.4" fill="#ffffff" stroke="#17353f" stroke-width="2"/></g>
<ellipse cx="1216.1" cy="495.1" rx="13.3" ry="6.4" fill="none" stroke="#17353f" stroke-width="2.1"/>
<path d="M818.5 289.5 Q822.6 284.3 829.8 285.7 L1330.6 384.4 Q1337.8 385.8 1333.7 391.0 L1155.3 617.0 Q1151.2 622.2 1144.0 620.8 L643.2 522.1 Q636.0 520.7 640.1 515.5 Z" fill="none" stroke="#22383f" stroke-width="1.9000000000000001"/>
<path d="M640.1 517.0 L636.6 612.0 Q637.1 615.0 642.5 617.6 L1136.7 716.9 Q1142.7 719.4 1152.2 707.5 L1330.4 487.0 L1333.7 391.0" fill="none" stroke="#17353f" stroke-width="2.2" stroke-linejoin="round"/>
<path d="M645.5 522.6 L642.5 617.6 M1140.5 620.1 L1136.7 716.9 M1156.8 618.0 L1152.2 707.5" fill="none" stroke="#17353f" stroke-width="2.1"/>
</g>
</svg>
<svg style="left:750px;top:146px" width="430" height="40" viewBox="750 146 430 40">
  <defs>
    <linearGradient id="vblue" x1="0" y1="0" x2="1" y2="1"><stop offset="0" stop-color="#a8d4e8"/><stop offset="1" stop-color="#5a9cc0"/></linearGradient>
    <radialGradient id="vlens" cx=".4" cy=".35" r=".7"><stop offset="0" stop-color="#ffffff"/><stop offset="1" stop-color="#dfe3e8"/></radialGradient>
    <radialGradient id="vball" cx=".4" cy=".3" r=".8"><stop offset="0" stop-color="#ffffff" stop-opacity=".75"/><stop offset=".5" stop-color="#ffffff" stop-opacity="0"/></radialGradient>
    <filter id="vsoft" x="-5%" y="-10%" width="110%" height="120%"><feGaussianBlur stdDeviation=".5"/></filter>
  </defs>
  <g filter="url(#vsoft)">
  <!-- zoom to fit -->
  <path d="M768.800 167 l-6.500 7" stroke="#6a9cba" stroke-width="4.600" stroke-linecap="round"/>
  <circle cx="774.400" cy="161" r="7.500" fill="url(#vlens)" stroke="#8a8e94" stroke-width="1.700"/>
  <g fill="#7a7e84"><circle cx="774.400" cy="157.200" r="1.200"/><circle cx="774.400" cy="164.800" r="1.200"/><circle cx="770.600" cy="161" r="1.200"/><circle cx="778.200" cy="161" r="1.200"/></g>
  <!-- zoom to area -->
  <path d="M800.300 168.500 l-6.500 6.500" stroke="#6a9cba" stroke-width="4.600" stroke-linecap="round"/>
  <path d="M799.500 154.500 h15.500 v14.500" fill="none" stroke="#5a5e64" stroke-width="1.600" stroke-dasharray="3 2"/>
  <circle cx="805.800" cy="162.600" r="7.500" fill="url(#vlens)" stroke="#9a9ea4" stroke-width="1.600"/>
  <!-- previous view -->
  <path d="M826 170 l14 -13.500 l5 -1.500 l2.500 3.500 l-2 4.500 l-12 12 c-3 1 -8 -2 -7.500 -5 z" fill="#e4e6e8" stroke="#a2a6aa" stroke-width="1.300" stroke-linejoin="round"/>
  <path d="M838 158.500 l5 5.500 M841 156.500 l4.500 5" stroke="#a2a6aa" stroke-width="1"/>
  <path d="M847.500 167 h-7 v-2.700 l-5 4.200 l5 4.200 v-2.700 h7 z" fill="#4a94c0"/>
  <!-- section view -->
  <path d="M859 160 c2 -5 10 -6 14 -5 l7.500 2 v14 l-7 -2 c-3 -1 -6 0 -7.500 6 h-7 z" fill="#e8e8ea" stroke="#8a8e94" stroke-width="1.200" stroke-linejoin="round"/>
  <path d="M859 160 h6.500 v15 h-6.500 z M874.500 158 l6 1.500 v11.500 l-6 -1.500 z" fill="#6aa6cc"/>
  <path d="M859.500 164 l6 -2.500 M859.500 168 l6 -2.500 M859.500 172 l6 -2.500 M874.500 162 l6 1.500 M874.500 166 l6 1.500" stroke="#cfe6f4" stroke-width="1.100"/>
  <!-- view orientation -->
  <path d="M891 160.500 l6 -6.500 h16 v14.500 l-6 6.500 h-16 z" fill="#f4f4f6" stroke="#7a7e84" stroke-width="1.300" stroke-linejoin="round"/>
  <path d="M897 154 v6.500 M907 160.500 l6 -6.500 M902 154 v6 M907 164 h6 M907 168 h6" stroke="#6a6e74" stroke-width="1.100" fill="none"/>
  <rect x="891" y="160.500" width="16" height="14.500" fill="url(#vblue)" stroke="#5a7e94" stroke-width="1.200"/>
  <path d="M923.300 163.300 h6.400 l-3.200 3.800 z" fill="#8a8a8c"/>
  <!-- display style -->
  <path d="M943 157.500 l9 -4 l12 3 v14.500 l-12 5 l-9 -4 z" fill="#f2f2f4" stroke="#8a8e94" stroke-width="1.300" stroke-linejoin="round"/>
  <path d="M943 157.500 l9 3.500 v15 l-9 -4 z" fill="#5e9cc2"/>
  <path d="M952 161 l6 -2 v14.500 l-6 2.500 z" fill="#a8d0e6"/>
  <path d="M943 157.500 l9 3.500 l12 -4.500" fill="none" stroke="#8a8e94" stroke-width="1.100"/>
  <path d="M973.600 163.300 h6.400 l-3.200 3.800 z" fill="#8a8a8c"/>
  <!-- hide/show eye -->
  <path d="M992 165 c5 -8 17 -9 23 0 c-6 8 -18 8 -23 0 z" fill="#e6e6e8" stroke="#a8a8ac" stroke-width="1.300"/>
  <circle cx="1003.500" cy="163.500" r="5.500" fill="#5a5a5e"/>
  <path d="M1003.500 157 v17.500" stroke="#77777b" stroke-width="1.300"/>
  <circle cx="1001.800" cy="161.500" r="1.800" fill="#c8c8cc"/>
  <path d="M1024 163.300 h6.400 l-3.200 3.800 z" fill="#8a8a8c"/>
  <!-- edit appearance -->
  <g>
    <circle cx="1051.500" cy="162.300" r="9.300" fill="#4aa04a"/>
    <path d="M1051.500 162.300 L1051.500 153 A9.300 9.300 0 0 1 1060.800 162.300 Z" fill="#e04848"/>
    <path d="M1051.500 162.300 L1042.200 162.300 A9.300 9.300 0 0 1 1051.500 153 Z" fill="#4a86e0"/>
    <path d="M1051.500 162.300 L1060.800 162.300 A9.300 9.300 0 0 1 1056 170.500 Z" fill="#f0d048"/>
    <circle cx="1051.500" cy="162.300" r="9.300" fill="url(#vball)"/>
    <path d="M1049 177.500 l1.500 -5 l10.500 -10.500 l3.500 3.500 l-10.500 10.500 z" fill="#5aa0d0" stroke="#6a6e74" stroke-width="1"/>
    <path d="M1049 177.500 l1.500 -5 l3.500 3.500 z" fill="#3a3a3a"/>
    <path d="M1059 164 l3.500 3.500" stroke="#d8d8d8" stroke-width="1.400"/>
  </g>
  <!-- apply scene -->
  <g>
    <rect x="1073.500" y="164" width="24" height="13" fill="#4a4a4c"/>
    <g fill="#f2f2f2"><rect x="1077.500" y="173" width="4" height="4"/><rect x="1085.500" y="173" width="4" height="4"/><rect x="1093.500" y="173" width="4" height="4"/><rect x="1073.500" y="169" width="4" height="4"/><rect x="1093.500" y="165" width="4" height="4"/><rect x="1073.500" y="165" width="2" height="2"/></g>
    <circle cx="1085.300" cy="162" r="9.300" fill="#4aa04a"/>
    <path d="M1085.300 162 L1085.300 152.700 A9.300 9.300 0 0 1 1094.600 162 Z" fill="#e04848"/>
    <path d="M1085.300 162 L1076 162 A9.300 9.300 0 0 1 1085.300 152.700 Z" fill="#4a86e0"/>
    <path d="M1085.300 162 L1094.600 162 A9.300 9.300 0 0 1 1089.800 170.200 Z" fill="#f0d048"/>
    <circle cx="1085.300" cy="162" r="9.300" fill="url(#vball)"/>
  </g>
  <path d="M1107.300 163.300 h6.400 l-3.200 3.800 z" fill="#8a8a8c"/>
  <!-- view settings monitor -->
  <rect x="1126.500" y="155.500" width="21" height="14" fill="#e2e2e4" stroke="#6a6a6e" stroke-width="1.500"/>
  <path d="M1137 169.500 v4 M1131.500 174 h11" stroke="#5a5a5e" stroke-width="2"/>
  <path d="M1158.500 163.300 h6.400 l-3.200 3.800 z" fill="#8a8a8c"/>
  </g>
</svg>
<!-- triad -->
<svg style="left:350px;top:730px" width="80" height="80" viewBox="350 730 80 80">
  <defs><filter id="tsoft" x="-10%" y="-10%" width="120%" height="120%"><feGaussianBlur stdDeviation=".55"/></filter></defs>
  <g filter="url(#tsoft)">
    <path d="M371.500 785.500 L381.500 772.500" stroke="#b01a1a" stroke-width="7.500"/>
    <path d="M377 768.500 l8 2 l-2 8 z" fill="#c42020"/>
    <path d="M368.700 788.500 V764" stroke="#2a8a2e" stroke-width="5.500"/>
    <path d="M368.700 753.500 l6 10.700 h-12 z" fill="#2f9a34"/>
    <path d="M368.700 756 l2.500 7.500 h-5 z" fill="#7acc7a"/>
    <path d="M370 786.500 L395 792" stroke="#2222cc" stroke-width="5"/>
    <path d="M404 793 l-10.500 -6.800 l-1.600 10.500 z" fill="#2a2ad8"/>
    <text x="364.200" y="751.500" font-family="Liberation Sans, sans-serif" font-size="14.500" fill="#5aa25e">Y</text>
    <text x="378.800" y="769.500" font-family="Liberation Sans, sans-serif" font-size="12.500" fill="#e46464">X</text>
    <text x="403.600" y="798.800" font-family="Liberation Sans, sans-serif" font-size="14" fill="#4040d0" textLength="6.800" lengthAdjust="spacingAndGlyphs">Z</text>
  </g>
</svg>
<!-- panel h-scrollbar -->
<div class="abs" style="left:2px;top:838px;width:314px;height:21px;background:#f0f0f2"></div>
<div class="abs" style="left:22px;top:840px;width:239px;height:16.500px;border:1px solid #a6a6a8;border-radius:3px;background:linear-gradient(#f2f2f4 0%,#e0e0e2 45%,#cacacc 55%,#c4c4c6 100%)"></div>
<svg style="left:0;top:838px" width="319" height="21" viewBox="0 838 319 21">
  <path d="M11.500 843.500 v8 l-5 -4 z" fill="#4a4a4c"/>
  <path d="M304.500 843.500 v8 l5 -4 z" fill="#4a4a4c"/>
  <path d="M137.500 845 v5.500 M140.500 845 v5.500 M143.500 845 v5.500" stroke="#5a5a5c" stroke-width="1.200"/>
</svg>
<!-- bottom tab row -->
<div class="abs" style="left:0;top:859px;width:1440px;height:21px;background:#f4f4f6;border-top:1.500px solid #a4a4a6;border-bottom:1.500px solid #a8a8aa"></div>
<div class="abs" style="left:3px;top:860px;width:82px;height:19px;background:#b9b9bb;border-top:2px solid #7e7e80"></div>
<svg style="left:0;top:860px" width="90" height="19" viewBox="0 860 90 19">
  <g stroke="#a6a6a8" stroke-width="1"><path d="M24.500 862 v17 M45 862 v17 M65.500 862 v17"/></g>
  <g fill="#a2a2a4">
    <path d="M9 866 h2 v8 h-2 z M18 866 v8 l-6 -4 z"/>
    <path d="M38 866 v8 l-6 -4 z"/>
    <path d="M52 866 v8 l6 -4 z"/>
    <path d="M69 866 v8 l6 -4 z M76 866 h2 v8 h-2 z"/>
  </g>
</svg>
<div class="abs" style="left:85px;top:860px;width:72px;height:19px;text-align:center;font-weight:bold;font-size:15px;line-height:18px;color:#1e1e1e;padding-left:3px">Model</div>
<div class="abs" style="left:157px;top:860px;width:137px;height:19.500px;background:#d4d4d6;border:1px solid #8e8e90;border-top:none;text-align:center;font-size:15px;line-height:17px;color:#2a2a2a;padding-right:9px;text-shadow:0 0 .5px rgba(40,40,40,.5)">Motion Study 1</div>
<!-- status bar -->
<div class="abs" style="left:0;top:880.500px;width:1440px;height:20px;background:#f4f4f6"></div>
<div class="abs" style="left:3px;top:882px;font-size:15px;line-height:20px;letter-spacing:-1px;color:#222;white-space:nowrap;text-shadow:0 0 .5px rgba(40,40,40,.5)">SOLIDWORKS</div>
<div class="abs" style="left:1247px;top:881px;width:1px;height:19px;background:#c4c4c6"></div><div class="abs" style="left:1248px;top:881px;width:1px;height:19px;background:#fff"></div>
<div class="abs" style="left:1345px;top:881px;width:1px;height:19px;background:#c4c4c6"></div><div class="abs" style="left:1346px;top:881px;width:1px;height:19px;background:#fff"></div>
<div class="abs" style="left:1365px;top:881px;width:1px;height:19px;background:#c4c4c6"></div><div class="abs" style="left:1366px;top:881px;width:1px;height:19px;background:#fff"></div>
<div class="abs" style="left:1260px;top:882px;font-size:14.600px;line-height:20px;color:#222;white-space:nowrap;text-shadow:0 0 .5px rgba(40,40,40,.5)">Editing Part</div>
<div class="abs" style="left:1400px;top:882px;width:38px;text-align:right;font-size:14.600px;line-height:20px;color:#222;white-space:nowrap;letter-spacing:-.5px;text-shadow:0 0 .5px rgba(40,40,40,.5)">IPS</div>
<!-- panel splitter grip -->
<div class="abs" style="left:316px;top:477.500px;width:12.300px;height:49.500px;background:#f6f6f8;border:1.700px solid #a2a2a4;border-left:none"></div>
<div class="abs" style="left:316px;top:479.200px;width:3px;height:46px;background:#f6f6f8"></div>
<div class="abs" style="left:318px;top:498.300px;width:7px;height:7px;border-radius:50%;background:#d6d6d8;border:1.600px solid #a6a6a8"></div>
</body>
</html>
